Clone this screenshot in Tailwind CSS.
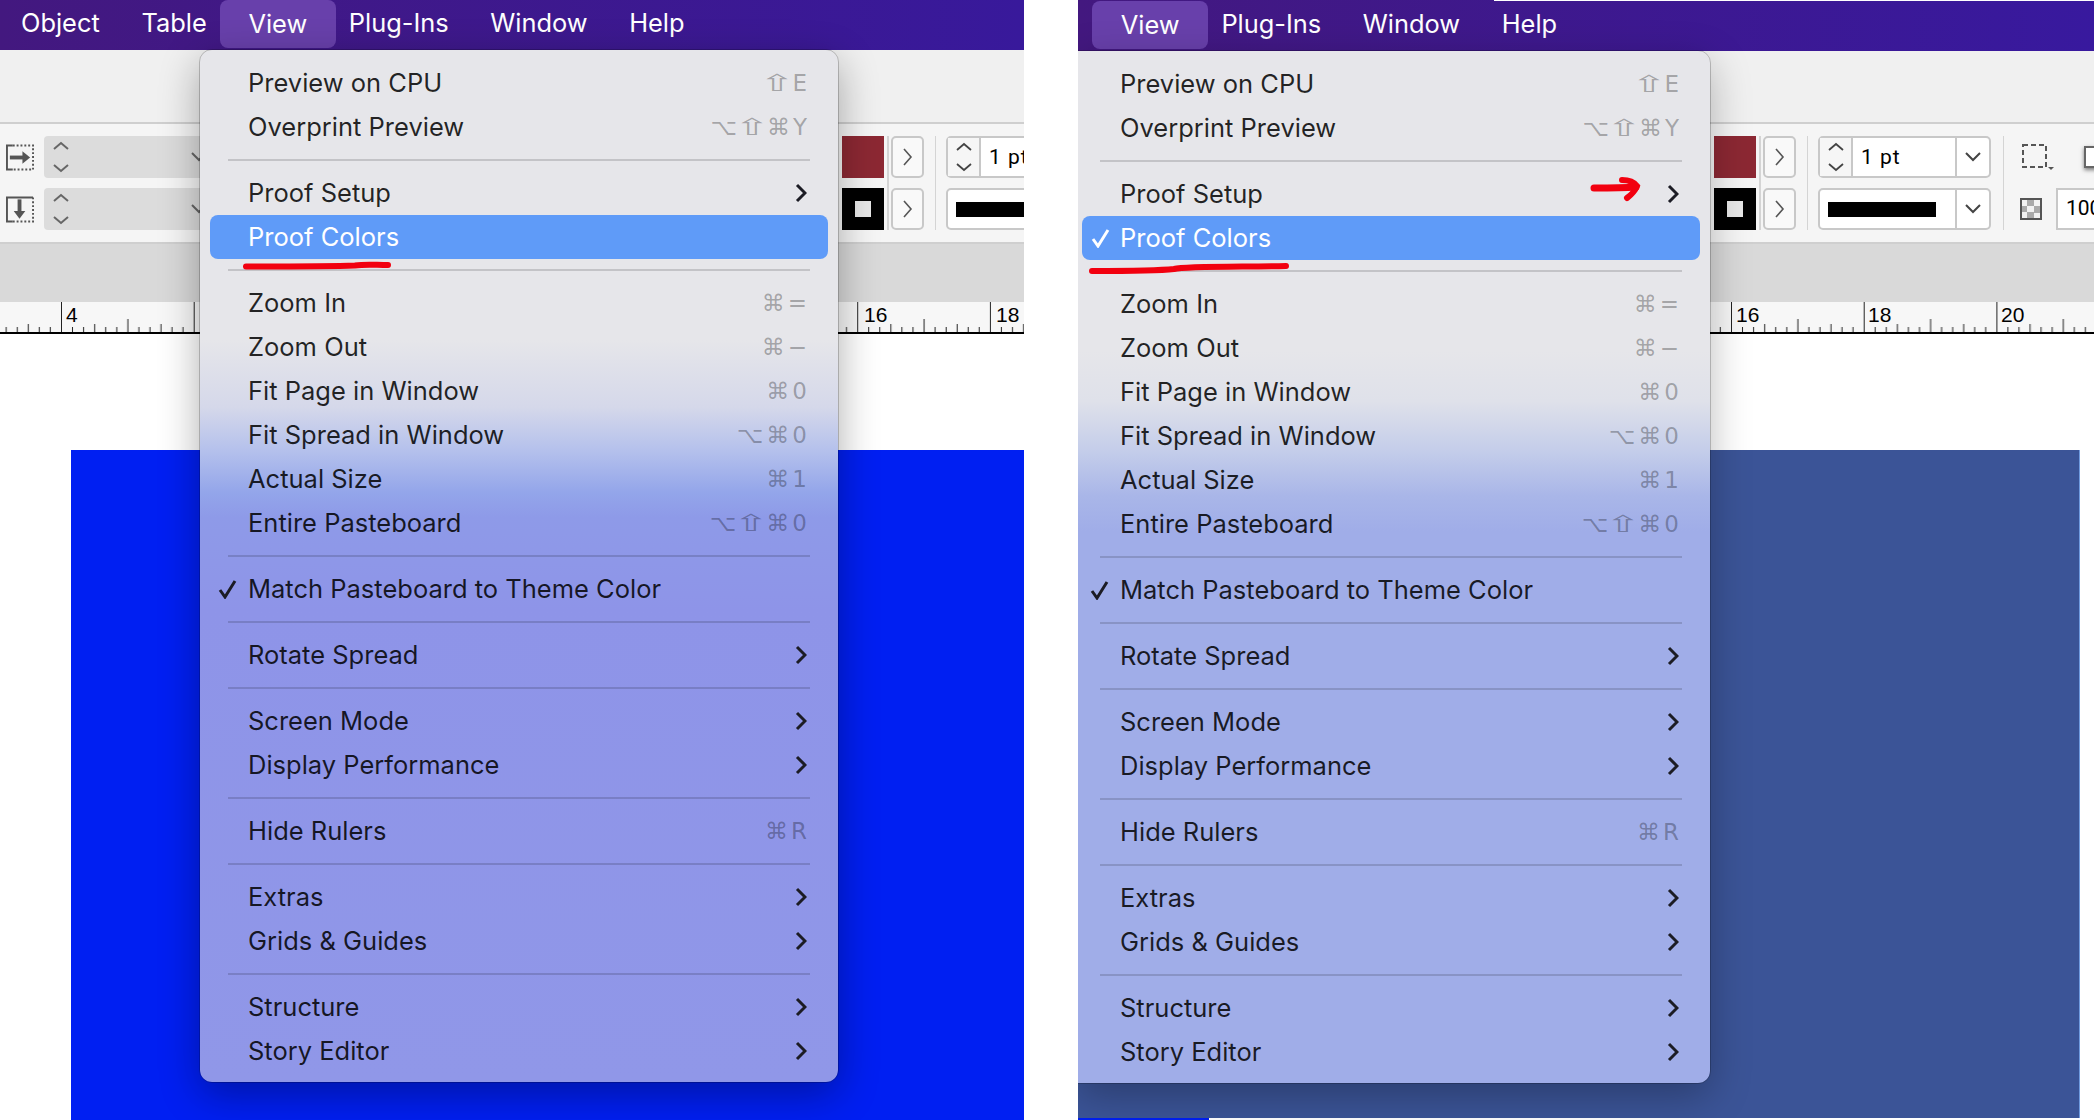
<!DOCTYPE html>
<html lang="en">
<head>
<meta charset="UTF-8" />
<title>Proof Colors</title>
<script src="https://cdn.jsdelivr.net/npm/@tailwindcss/browser@4"></script>
</head>
<body class="bg-white font-['Inter',sans-serif] antialiased">
<div class="flex w-[2094px] h-[1120px] overflow-hidden gap-[54px]">

  <!-- Left window -->
  <section class="relative flex flex-col w-[1024px] h-[1120px] shrink-0 overflow-hidden bg-white">
    <!-- Menu bar -->
    <nav class="flex items-center h-[50px] shrink-0 pb-[3px] text-white text-[25.4px] bg-[linear-gradient(90deg,#43187f,#38199b)]">
      <span class="pl-[21px] pr-[21px]">Object</span>
      <span class="px-[20.8px]">Table</span>
      <span class="flex items-center h-[48px] mt-[1px] -mx-[8px] px-[28.8px] rounded-lg bg-[#6840ab]">View</span>
      <span class="px-[20.8px]">Plug-Ins</span>
      <span class="px-[20.8px]">Window</span>
      <span class="px-[20.8px]">Help</span>
    </nav>
    <div class="h-[72px] shrink-0 bg-[#f0f0f0]"></div>
    <!-- Control strip -->
    <div class="flex h-[122px] shrink-0 pt-[12px] border-y-2 border-[#cfcfcf] bg-[#f5f5f5]">
      <div class="flex flex-col gap-[10px] ml-[6px] w-[28px] shrink-0">
        <div class="flex items-center h-[42px]">
          <svg width="29" height="27" viewBox="0 0 29 27" fill="none"><path d="M7 1H1V26H7" stroke="#555" stroke-width="2"/><path d="M7 1H28V26H7" stroke="#555" stroke-width="2" stroke-dasharray="2 2"/><path d="M4 13.5H18" stroke="#555" stroke-width="4"/><path d="M17 7l8 6.5-8 6.5z" fill="#555"/></svg>
        </div>
        <div class="flex items-center h-[42px]">
          <svg width="29" height="27" viewBox="0 0 29 27" fill="none"><path d="M28 1H1V26H7" stroke="#555" stroke-width="2"/><path d="M7 26H28V1" stroke="#555" stroke-width="2" stroke-dasharray="2 2"/><path d="M14 3V16" stroke="#555" stroke-width="4"/><path d="M8 15l6 8 6-8z" fill="#555"/></svg>
        </div>
      </div>
      <div class="flex flex-col gap-[10px] ml-[10px] w-[172px] shrink-0">
        <div class="flex items-center justify-between h-[42px] pl-[9px] pr-[9px] rounded bg-[#dcdcdc]">
          <svg width="16" height="32" viewBox="0 0 16 32" fill="none" stroke="#666" stroke-width="2"><path d="M1 8l7-6 7 6M1 24l7 6 7-6"/></svg>
          <svg width="16" height="10" viewBox="0 0 16 10" fill="none" stroke="#666" stroke-width="2"><path d="M1 1l7 7 7-7"/></svg>
        </div>
        <div class="flex items-center justify-between h-[42px] pl-[9px] pr-[9px] rounded bg-[#dcdcdc]">
          <svg width="16" height="32" viewBox="0 0 16 32" fill="none" stroke="#666" stroke-width="2"><path d="M1 8l7-6 7 6M1 24l7 6 7-6"/></svg>
          <svg width="16" height="10" viewBox="0 0 16 10" fill="none" stroke="#666" stroke-width="2"><path d="M1 1l7 7 7-7"/></svg>
        </div>
      </div>
      <!-- Fill and stroke -->
      <div class="flex ml-[626px] shrink-0">
        <div class="flex flex-col gap-[10px] w-[42px] shrink-0">
          <div class="h-[42px] bg-[#8c2833]"></div>
          <div class="flex items-center justify-center h-[42px] bg-black"><div class="w-[16px] h-[16px] bg-[#e8e8e8]"></div></div>
        </div>
        <div class="ml-[3px] w-[2px] h-[94px] shrink-0 bg-[#d4d4d4]"></div>
        <div class="flex flex-col gap-[10px] ml-[2px] shrink-0">
          <div class="flex items-center justify-center w-[33px] h-[42px] rounded-[5px] border-2 border-[#c8c8c8] bg-[#f9f9f9]"><svg width="10" height="18" viewBox="0 0 10 18" fill="none" stroke="#555" stroke-width="1.6"><path d="M1 1l7 8-7 8"/></svg></div>
          <div class="flex items-center justify-center w-[33px] h-[42px] rounded-[5px] border-2 border-[#c8c8c8] bg-[#f9f9f9]"><svg width="10" height="18" viewBox="0 0 10 18" fill="none" stroke="#555" stroke-width="1.6"><path d="M1 1l7 8-7 8"/></svg></div>
        </div>
        <div class="ml-[11px] w-[1px] h-[94px] shrink-0 bg-[#d4d4d4]"></div>
        <div class="flex flex-col gap-[10px] ml-[10px] w-[173px] shrink-0">
          <div class="flex h-[42px] rounded-[5px] border-2 border-[#c8c8c8] bg-white">
            <div class="flex items-center justify-center w-[33px] shrink-0 border-r-2 border-[#c8c8c8] bg-[#f6f6f6]"><svg width="16" height="32" viewBox="0 0 16 32" fill="none" stroke="#444" stroke-width="1.8"><path d="M1 9l7-6 7 6M1 23l7 6 7-6"/></svg></div>
            <span class="flex items-center pl-[8px] pt-[2px] text-[21px] tracking-[1px] text-black font-['Roboto',sans-serif]">1&nbsp;pt</span>
          </div>
          <div class="flex items-center h-[42px] pl-[8px] rounded-[5px] border-2 border-[#c8c8c8] bg-white"><div class="w-[108px] h-[15px] bg-black"></div></div>
        </div>
      </div>
    </div>
    <div class="h-[58px] shrink-0 bg-[#d9d9d9]"></div>
    <!-- Ruler -->
    <svg class="block w-full h-[32px] shrink-0 border-b-2 border-black bg-[#f7f7f7]" width="1024" height="32" font-family="Liberation Sans" font-size="21" fill="#000">
      <defs>
        <pattern id="ticksA" patternUnits="userSpaceOnUse" width="132.7" height="30" patternTransform="translate(61 0)">
          <path d="M.5 0V30M11.5 25V30M22.6 25V30M33.7 22V30M44.7 25V30M55.8 25V30M66.9 17V30M77.9 25V30M89 25V30M100 22V30M111 25V30M122 25V30" stroke="#222" stroke-width="1" fill="none"/>
        </pattern>
      </defs>
      <rect width="1024" height="30" fill="url(#ticksA)"/>
      <text x="66" y="20">4</text>
      <text x="864" y="20">16</text>
      <text x="996" y="20">18</text>
    </svg>
    <!-- Page on the pasteboard -->
    <div class="flex flex-1 pt-[116px] pl-[71px] bg-white">
      <div class="flex-1 bg-[#001ff2]"></div>
    </div>

    <!-- View menu -->
    <div class="absolute left-[200px] top-[50px] w-[638px] h-[1032px] pt-[11px] rounded-[12px] text-[25.5px] text-black/85 outline outline-1 outline-black/20 shadow-[0_12px_40px_rgba(0,0,0,0.33)] bg-[linear-gradient(180deg,#e6e6ea_0,#e6e6ea_290px,#d5d8ea_357px,#b5c1ec_400px,#93a5ea_443px,#8e9ae8_467px,#8e94e8_560px,#9097e8_100%)]">
      <div class="flex items-center justify-between h-11 pl-12 pr-[31px]"><span>Preview on CPU</span><span class="flex items-center gap-[3px] text-black/30 font-['DejaVu_Sans',sans-serif] text-[23px]"><span class="inline-block w-[24px] text-center scale-x-[1.9]">⇧</span><span>E</span></span></div>
      <div class="flex items-center justify-between h-11 pl-12 pr-[31px]"><span>Overprint Preview</span><span class="flex items-center gap-[3px] text-black/30 font-['DejaVu_Sans',sans-serif] text-[23px]"><span>⌥</span><span class="inline-block w-[24px] text-center scale-x-[1.9]">⇧</span><span>⌘</span><span>Y</span></span></div>
      <div class="h-[2px] mx-[28px] my-[10px] bg-black/15"></div>
      <div class="flex items-center justify-between h-11 pl-12 pr-[31px]"><span>Proof Setup</span><svg width="12" height="20" viewBox="0 0 12 20" fill="none" stroke="#1c1c24" stroke-width="3"><path d="M2 2l8 8-8 8"/></svg></div>
      <div class="flex items-center h-11 mx-[10px] pl-[38px] rounded-lg text-white bg-[#5f9bf8]">Proof Colors</div>
      <div class="h-[2px] mx-[28px] my-[10px] bg-black/15"></div>
      <div class="flex items-center justify-between h-11 pl-12 pr-[31px]"><span>Zoom In</span><span class="flex items-center gap-[3px] text-black/30 font-['DejaVu_Sans',sans-serif] text-[23px]"><span>⌘</span><span>=</span></span></div>
      <div class="flex items-center justify-between h-11 pl-12 pr-[31px]"><span>Zoom Out</span><span class="flex items-center gap-[3px] text-black/30 font-['DejaVu_Sans',sans-serif] text-[23px]"><span>⌘</span><span>−</span></span></div>
      <div class="flex items-center justify-between h-11 pl-12 pr-[31px]"><span>Fit Page in Window</span><span class="flex items-center gap-[3px] text-black/30 font-['DejaVu_Sans',sans-serif] text-[23px]"><span>⌘</span><span>0</span></span></div>
      <div class="flex items-center justify-between h-11 pl-12 pr-[31px]"><span>Fit Spread in Window</span><span class="flex items-center gap-[3px] text-black/30 font-['DejaVu_Sans',sans-serif] text-[23px]"><span>⌥</span><span>⌘</span><span>0</span></span></div>
      <div class="flex items-center justify-between h-11 pl-12 pr-[31px]"><span>Actual Size</span><span class="flex items-center gap-[3px] text-black/30 font-['DejaVu_Sans',sans-serif] text-[23px]"><span>⌘</span><span>1</span></span></div>
      <div class="flex items-center justify-between h-11 pl-12 pr-[31px]"><span>Entire Pasteboard</span><span class="flex items-center gap-[3px] text-black/30 font-['DejaVu_Sans',sans-serif] text-[23px]"><span>⌥</span><span class="inline-block w-[24px] text-center scale-x-[1.9]">⇧</span><span>⌘</span><span>0</span></span></div>
      <div class="h-[2px] mx-[28px] my-[10px] bg-black/15"></div>
      <div class="relative flex items-center h-11 pl-12"><svg class="absolute left-[18px] top-[12px]" width="20" height="20" viewBox="0 0 20 20" fill="none" stroke="#1c1c24" stroke-width="3"><path d="M2 11l5 7L17 2"/></svg>Match Pasteboard to Theme Color</div>
      <div class="h-[2px] mx-[28px] my-[10px] bg-black/15"></div>
      <div class="flex items-center justify-between h-11 pl-12 pr-[31px]"><span>Rotate Spread</span><svg width="12" height="20" viewBox="0 0 12 20" fill="none" stroke="#1c1c24" stroke-width="3"><path d="M2 2l8 8-8 8"/></svg></div>
      <div class="h-[2px] mx-[28px] my-[10px] bg-black/15"></div>
      <div class="flex items-center justify-between h-11 pl-12 pr-[31px]"><span>Screen Mode</span><svg width="12" height="20" viewBox="0 0 12 20" fill="none" stroke="#1c1c24" stroke-width="3"><path d="M2 2l8 8-8 8"/></svg></div>
      <div class="flex items-center justify-between h-11 pl-12 pr-[31px]"><span>Display Performance</span><svg width="12" height="20" viewBox="0 0 12 20" fill="none" stroke="#1c1c24" stroke-width="3"><path d="M2 2l8 8-8 8"/></svg></div>
      <div class="h-[2px] mx-[28px] my-[10px] bg-black/15"></div>
      <div class="flex items-center justify-between h-11 pl-12 pr-[31px]"><span>Hide Rulers</span><span class="flex items-center gap-[3px] text-black/30 font-['DejaVu_Sans',sans-serif] text-[23px]"><span>⌘</span><span>R</span></span></div>
      <div class="h-[2px] mx-[28px] my-[10px] bg-black/15"></div>
      <div class="flex items-center justify-between h-11 pl-12 pr-[31px]"><span>Extras</span><svg width="12" height="20" viewBox="0 0 12 20" fill="none" stroke="#1c1c24" stroke-width="3"><path d="M2 2l8 8-8 8"/></svg></div>
      <div class="flex items-center justify-between h-11 pl-12 pr-[31px]"><span>Grids &amp; Guides</span><svg width="12" height="20" viewBox="0 0 12 20" fill="none" stroke="#1c1c24" stroke-width="3"><path d="M2 2l8 8-8 8"/></svg></div>
      <div class="h-[2px] mx-[28px] my-[10px] bg-black/15"></div>
      <div class="flex items-center justify-between h-11 pl-12 pr-[31px]"><span>Structure</span><svg width="12" height="20" viewBox="0 0 12 20" fill="none" stroke="#1c1c24" stroke-width="3"><path d="M2 2l8 8-8 8"/></svg></div>
      <div class="flex items-center justify-between h-11 pl-12 pr-[31px]"><span>Story Editor</span><svg width="12" height="20" viewBox="0 0 12 20" fill="none" stroke="#1c1c24" stroke-width="3"><path d="M2 2l8 8-8 8"/></svg></div>
    </div>
    <!-- Red marker under the item -->
    <svg class="absolute left-[240px] top-[255px]" width="156" height="20" viewBox="0 0 156 20" fill="none"><path d="M6 11.5C50 11.5 90 11.5 115 10.5C125 9 135 10 148 10" stroke="#f2000f" stroke-width="6" stroke-linecap="round"/></svg>
  </section>

  <!-- Right window -->
  <section class="relative flex flex-col w-[1016px] h-[1120px] shrink-0 overflow-hidden bg-white">
    <nav class="flex items-center h-[51px] shrink-0 pl-[14px] pb-[3px] text-white text-[25.4px] bg-[linear-gradient(90deg,#43187f,#38199e)]">
      <span class="flex items-center h-[48px] mt-[2px] px-[28.8px] rounded-lg bg-[#6840ab]">View</span>
      <span class="pl-[13px] pr-[20.8px]">Plug-Ins</span>
      <span class="px-[20.8px]">Window</span>
      <span class="px-[20.8px]">Help</span>
    </nav>
    <!-- thin white sliver left along the top of the crop -->
    <div class="absolute left-[416px] right-0 top-0 h-px bg-white"></div>
    <div class="h-[71px] shrink-0 bg-[#f0f0f0]"></div>
    <div class="flex h-[122px] shrink-0 pt-[12px] pl-[636px] border-y-2 border-[#cfcfcf] bg-[#f5f5f5]">
      <div class="flex flex-col gap-[10px] w-[42px] shrink-0">
        <div class="h-[42px] bg-[#8c2833]"></div>
        <div class="flex items-center justify-center h-[42px] bg-black"><div class="w-[16px] h-[16px] bg-[#e8e8e8]"></div></div>
      </div>
      <div class="ml-[3px] w-[2px] h-[94px] shrink-0 bg-[#d4d4d4]"></div>
      <div class="flex flex-col gap-[10px] ml-[2px] shrink-0">
        <div class="flex items-center justify-center w-[33px] h-[42px] rounded-[5px] border-2 border-[#c8c8c8] bg-[#f9f9f9]"><svg width="10" height="18" viewBox="0 0 10 18" fill="none" stroke="#555" stroke-width="1.6"><path d="M1 1l7 8-7 8"/></svg></div>
        <div class="flex items-center justify-center w-[33px] h-[42px] rounded-[5px] border-2 border-[#c8c8c8] bg-[#f9f9f9]"><svg width="10" height="18" viewBox="0 0 10 18" fill="none" stroke="#555" stroke-width="1.6"><path d="M1 1l7 8-7 8"/></svg></div>
      </div>
      <div class="ml-[11px] w-[1px] h-[94px] shrink-0 bg-[#d4d4d4]"></div>
      <div class="flex flex-col gap-[10px] ml-[10px] w-[173px] shrink-0">
        <div class="flex h-[42px] rounded-[5px] border-2 border-[#c8c8c8] bg-white">
          <div class="flex items-center justify-center w-[33px] shrink-0 border-r-2 border-[#c8c8c8] bg-[#f6f6f6]"><svg width="16" height="32" viewBox="0 0 16 32" fill="none" stroke="#444" stroke-width="1.8"><path d="M1 9l7-6 7 6M1 23l7 6 7-6"/></svg></div>
          <span class="flex items-center w-[102px] shrink-0 pl-[8px] pt-[2px] text-[21px] tracking-[1px] text-black font-['Roboto',sans-serif]">1&nbsp;pt</span>
          <div class="flex flex-1 items-center justify-center border-l-2 border-[#c8c8c8]"><svg width="16" height="10" viewBox="0 0 16 10" fill="none" stroke="#444" stroke-width="2"><path d="M1 1l7 7 7-7"/></svg></div>
        </div>
        <div class="flex h-[42px] rounded-[5px] border-2 border-[#c8c8c8] bg-white">
          <div class="flex items-center w-[135px] shrink-0 pl-[8px]"><div class="w-[108px] h-[15px] bg-black"></div></div>
          <div class="flex flex-1 items-center justify-center border-l-2 border-[#c8c8c8]"><svg width="16" height="10" viewBox="0 0 16 10" fill="none" stroke="#444" stroke-width="2"><path d="M1 1l7 7 7-7"/></svg></div>
        </div>
      </div>
      <div class="ml-[12px] w-[1px] h-[94px] shrink-0 bg-[#d4d4d4]"></div>
      <!-- Corner and opacity tools -->
      <div class="flex flex-col gap-[10px] ml-[16px] w-[30px] shrink-0">
        <div class="flex items-center h-[42px] pl-[2px] shrink-0"><svg class="shrink-0" width="32" height="26" viewBox="0 0 32 26" fill="none"><rect x="1" y="1" width="23" height="22" stroke="#555" stroke-width="2" stroke-dasharray="5 3"/><path d="M26 23h6l-3 3z" fill="#555"/></svg></div>
        <div class="flex items-center h-[42px]"><svg width="22" height="22" viewBox="0 0 22 22"><rect width="22" height="22" fill="#f2f2f2"/><path d="M7 1h7v7H7zM14 8h7v7h-7zM1 8h6v6H1zM7 14h7v7H7z" fill="#aaa"/><rect x="1" y="1" width="20" height="20" fill="none" stroke="#555" stroke-width="2"/></svg></div>
      </div>
      <div class="flex flex-col gap-[10px] ml-[6px] shrink-0">
        <div class="flex items-center h-[42px] pl-[28px]"><div class="w-[30px] h-[22px] shrink-0 border-2 border-[#666] bg-white shadow-[0_2px_4px_rgba(0,0,0,0.5)]"></div></div>
        <div class="flex items-center w-[60px] h-[42px] pl-[8px] border-2 border-[#c8c8c8] bg-white text-[21px] text-black font-['Roboto',sans-serif]">100</div>
      </div>
    </div>
    <div class="h-[58px] shrink-0 bg-[#d9d9d9]"></div>
    <svg class="block w-full h-[32px] shrink-0 border-b-2 border-black bg-[#f7f7f7]" width="1016" height="32" font-family="Liberation Sans" font-size="21" fill="#000">
      <defs>
        <pattern id="ticksB" patternUnits="userSpaceOnUse" width="132.7" height="30" patternTransform="translate(653 0)">
          <path d="M.5 0V30M11.5 25V30M22.6 25V30M33.7 22V30M44.7 25V30M55.8 25V30M66.9 17V30M77.9 25V30M89 25V30M100 22V30M111 25V30M122 25V30" stroke="#222" stroke-width="1" fill="none"/>
        </pattern>
      </defs>
      <rect width="1016" height="30" fill="url(#ticksB)"/>
      <text x="658" y="20">16</text>
      <text x="790" y="20">18</text>
      <text x="923" y="20">20</text>
    </svg>
    <div class="flex flex-col flex-1 pt-[116px] bg-white">
      <div class="flex-1 w-[1002px] border-r border-[#6f9be0] bg-[#3b5497]"></div>
      <div class="h-[2px] w-[131px] bg-[#001ff2]"></div>
    </div>

    <div class="absolute left-0 top-[51px] w-[632px] h-[1032px] pt-[11px] rounded-r-[12px] text-[25.5px] text-black/85 outline outline-1 outline-black/20 shadow-[0_12px_40px_rgba(0,0,0,0.28)] bg-[linear-gradient(180deg,#e6e6ea_0,#e6e6ea_300px,#dfe1ea_350px,#c4cdea_400px,#a9b6e8_445px,#a0ade8_480px,#a0ade8_100%)]">
      <div class="flex items-center justify-between h-11 pl-[42px] pr-[31px]"><span>Preview on CPU</span><span class="flex items-center gap-[3px] text-black/30 font-['DejaVu_Sans',sans-serif] text-[23px]"><span class="inline-block w-[24px] text-center scale-x-[1.9]">⇧</span><span>E</span></span></div>
      <div class="flex items-center justify-between h-11 pl-[42px] pr-[31px]"><span>Overprint Preview</span><span class="flex items-center gap-[3px] text-black/30 font-['DejaVu_Sans',sans-serif] text-[23px]"><span>⌥</span><span class="inline-block w-[24px] text-center scale-x-[1.9]">⇧</span><span>⌘</span><span>Y</span></span></div>
      <div class="h-[2px] ml-[22px] mr-[28px] my-[10px] bg-black/15"></div>
      <div class="flex items-center justify-between h-11 pl-[42px] pr-[31px]"><span>Proof Setup</span><svg width="12" height="20" viewBox="0 0 12 20" fill="none" stroke="#1c1c24" stroke-width="3"><path d="M2 2l8 8-8 8"/></svg></div>
      <div class="relative flex items-center h-11 ml-[4px] mr-[10px] pl-[38px] rounded-lg text-white bg-[#5f9bf8]"><svg class="absolute left-[9px] top-[12px]" width="20" height="20" viewBox="0 0 20 20" fill="none" stroke="#fff" stroke-width="3"><path d="M2 11l5 7L17 2"/></svg>Proof Colors</div>
      <div class="h-[2px] ml-[22px] mr-[28px] my-[10px] bg-black/15"></div>
      <div class="flex items-center justify-between h-11 pl-[42px] pr-[31px]"><span>Zoom In</span><span class="flex items-center gap-[3px] text-black/30 font-['DejaVu_Sans',sans-serif] text-[23px]"><span>⌘</span><span>=</span></span></div>
      <div class="flex items-center justify-between h-11 pl-[42px] pr-[31px]"><span>Zoom Out</span><span class="flex items-center gap-[3px] text-black/30 font-['DejaVu_Sans',sans-serif] text-[23px]"><span>⌘</span><span>−</span></span></div>
      <div class="flex items-center justify-between h-11 pl-[42px] pr-[31px]"><span>Fit Page in Window</span><span class="flex items-center gap-[3px] text-black/30 font-['DejaVu_Sans',sans-serif] text-[23px]"><span>⌘</span><span>0</span></span></div>
      <div class="flex items-center justify-between h-11 pl-[42px] pr-[31px]"><span>Fit Spread in Window</span><span class="flex items-center gap-[3px] text-black/30 font-['DejaVu_Sans',sans-serif] text-[23px]"><span>⌥</span><span>⌘</span><span>0</span></span></div>
      <div class="flex items-center justify-between h-11 pl-[42px] pr-[31px]"><span>Actual Size</span><span class="flex items-center gap-[3px] text-black/30 font-['DejaVu_Sans',sans-serif] text-[23px]"><span>⌘</span><span>1</span></span></div>
      <div class="flex items-center justify-between h-11 pl-[42px] pr-[31px]"><span>Entire Pasteboard</span><span class="flex items-center gap-[3px] text-black/30 font-['DejaVu_Sans',sans-serif] text-[23px]"><span>⌥</span><span class="inline-block w-[24px] text-center scale-x-[1.9]">⇧</span><span>⌘</span><span>0</span></span></div>
      <div class="h-[2px] ml-[22px] mr-[28px] my-[10px] bg-black/15"></div>
      <div class="relative flex items-center h-11 pl-[42px]"><svg class="absolute left-[12px] top-[12px]" width="20" height="20" viewBox="0 0 20 20" fill="none" stroke="#1c1c24" stroke-width="3"><path d="M2 11l5 7L17 2"/></svg>Match Pasteboard to Theme Color</div>
      <div class="h-[2px] ml-[22px] mr-[28px] my-[10px] bg-black/15"></div>
      <div class="flex items-center justify-between h-11 pl-[42px] pr-[31px]"><span>Rotate Spread</span><svg width="12" height="20" viewBox="0 0 12 20" fill="none" stroke="#1c1c24" stroke-width="3"><path d="M2 2l8 8-8 8"/></svg></div>
      <div class="h-[2px] ml-[22px] mr-[28px] my-[10px] bg-black/15"></div>
      <div class="flex items-center justify-between h-11 pl-[42px] pr-[31px]"><span>Screen Mode</span><svg width="12" height="20" viewBox="0 0 12 20" fill="none" stroke="#1c1c24" stroke-width="3"><path d="M2 2l8 8-8 8"/></svg></div>
      <div class="flex items-center justify-between h-11 pl-[42px] pr-[31px]"><span>Display Performance</span><svg width="12" height="20" viewBox="0 0 12 20" fill="none" stroke="#1c1c24" stroke-width="3"><path d="M2 2l8 8-8 8"/></svg></div>
      <div class="h-[2px] ml-[22px] mr-[28px] my-[10px] bg-black/15"></div>
      <div class="flex items-center justify-between h-11 pl-[42px] pr-[31px]"><span>Hide Rulers</span><span class="flex items-center gap-[3px] text-black/30 font-['DejaVu_Sans',sans-serif] text-[23px]"><span>⌘</span><span>R</span></span></div>
      <div class="h-[2px] ml-[22px] mr-[28px] my-[10px] bg-black/15"></div>
      <div class="flex items-center justify-between h-11 pl-[42px] pr-[31px]"><span>Extras</span><svg width="12" height="20" viewBox="0 0 12 20" fill="none" stroke="#1c1c24" stroke-width="3"><path d="M2 2l8 8-8 8"/></svg></div>
      <div class="flex items-center justify-between h-11 pl-[42px] pr-[31px]"><span>Grids &amp; Guides</span><svg width="12" height="20" viewBox="0 0 12 20" fill="none" stroke="#1c1c24" stroke-width="3"><path d="M2 2l8 8-8 8"/></svg></div>
      <div class="h-[2px] ml-[22px] mr-[28px] my-[10px] bg-black/15"></div>
      <div class="flex items-center justify-between h-11 pl-[42px] pr-[31px]"><span>Structure</span><svg width="12" height="20" viewBox="0 0 12 20" fill="none" stroke="#1c1c24" stroke-width="3"><path d="M2 2l8 8-8 8"/></svg></div>
      <div class="flex items-center justify-between h-11 pl-[42px] pr-[31px]"><span>Story Editor</span><svg width="12" height="20" viewBox="0 0 12 20" fill="none" stroke="#1c1c24" stroke-width="3"><path d="M2 2l8 8-8 8"/></svg></div>
    </div>
    <!-- Red marks -->
    <svg class="absolute left-[8px] top-[256px]" width="212" height="22" viewBox="0 0 212 22" fill="none"><path d="M6 15C40 15 70 15 88 13C100 10 160 11 200 10" stroke="#f2000f" stroke-width="6" stroke-linecap="round"/></svg>
    <svg class="absolute left-[512px] top-[175px]" width="52" height="28" viewBox="0 0 52 28" fill="none"><path d="M4 13C20 13 32 13 46 12" stroke="#f2000f" stroke-width="7" stroke-linecap="round"/><path d="M32 5C38 5 44 7 47 11C45 16 41 20 37 23" stroke="#f2000f" stroke-width="6" stroke-linecap="round"/></svg>
  </section>
</div>
</body>
</html>
